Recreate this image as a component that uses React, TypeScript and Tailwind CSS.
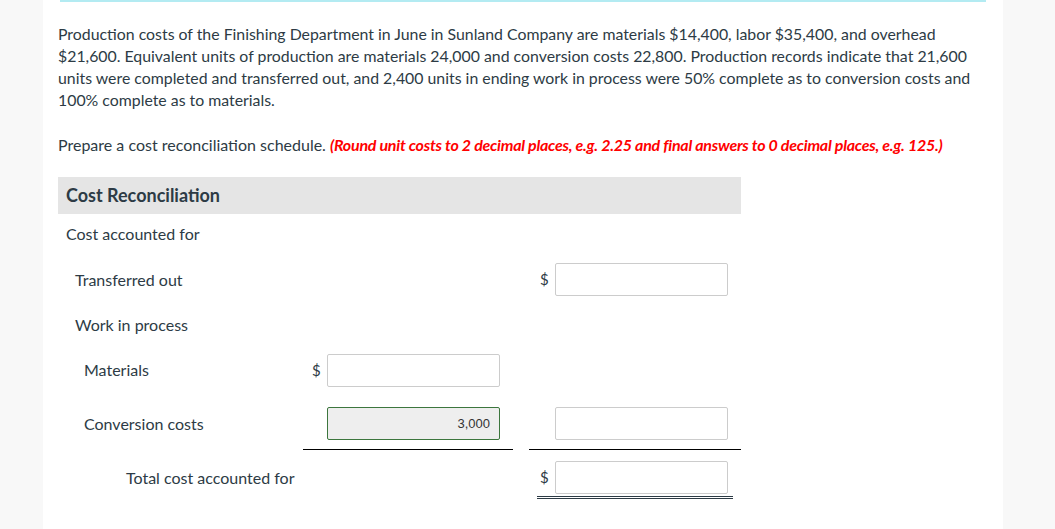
import React from 'react';

const Money: React.FC<{ dollar?: boolean; value?: string; filled?: boolean }> = ({ dollar, value, filled }) => (
    <div className="flex items-center">
        <span className={`w-[15px] text-[15px] ${dollar ? '' : 'invisible'}`}>$</span>
        <div
            className={`w-[173px] h-[33px] flex items-center justify-end px-[9px] rounded-[2px] border text-[13px] text-[#333] ${
                filled ? 'bg-[#eeeeee] border-[#3c763d]' : 'bg-white border-[#cccccc]'
            }`}
            style={{ fontFamily: 'Arial, "Liberation Sans", sans-serif' }}
        >
            {value}
        </div>
    </div>
);

export default function App() {
    return (
        <div className="min-h-[529px] bg-[#f8f8f8] text-[#2d3b45]" style={{ fontFamily: 'Lato, "Open Sans", sans-serif' }}>
            <div className="ml-[43px] w-[960px] min-h-[529px] bg-white">
                {/* top accent */}
                <div className="ml-[17px] w-[926px] h-[2px] bg-[#b3ebf2]" />

                <div className="px-[15px] pt-[21px]">
                    <p className="text-[15.85px] leading-[22px]">
                        Production costs of the Finishing Department in June in Sunland Company are materials $14,400, labor $35,400, and overhead
                        $21,600. Equivalent units of production are materials 24,000 and conversion costs 22,800. Production records indicate that 21,600
                        units were completed and transferred out, and 2,400 units in ending work in process were 50% complete as to conversion costs and
                        100% complete as to materials.
                    </p>

                    <p className="mt-[23px] text-[16px] leading-[22px]">
                        Prepare a cost reconciliation schedule.{' '}
                        <span className="text-[#ff0000] font-bold italic tracking-[-0.25px]">
                            (Round unit costs to 2 decimal places, e.g. 2.25 and final answers to 0 decimal places, e.g. 125.)
                        </span>
                    </p>

                    {/* schedule */}
                    <div className="mt-[21px] w-[683px]">
                        <div className="h-[37px] bg-[#e5e5e5] flex items-center px-[8px] text-[18px] font-bold">
                            Cost Reconciliation
                        </div>

                        <div className="h-[40px] flex items-center px-[8px] text-[16px]">Cost accounted for</div>

                        <div className="grid grid-cols-[229px_210px_212px] gap-x-[16px] text-[16px]">
                            {/* Transferred out */}
                            <div className="h-[51px] flex items-center pl-[17px]">Transferred out</div>
                            <div />
                            <div className="flex items-center justify-end pr-[13px]">
                                <Money dollar />
                            </div>

                            {/* Work in process */}
                            <div className="h-[40px] flex items-center pl-[17px]">Work in process</div>
                            <div />
                            <div />

                            {/* Materials */}
                            <div className="h-[50px] flex items-center pl-[26px]">Materials</div>
                            <div className="flex items-center justify-end pr-[13px]">
                                <Money dollar />
                            </div>
                            <div />

                            {/* Conversion costs */}
                            <div className="flex items-center pl-[26px] pt-[2px]">Conversion costs</div>
                            <div className="flex justify-end pr-[13px] pt-[12px] pb-[9px] border-b border-black">
                                <Money value="3,000" filled />
                            </div>
                            <div className="flex justify-end pr-[13px] pt-[12px] pb-[9px] border-b border-black">
                                <Money />
                            </div>

                            {/* Total */}
                            <div className="flex items-center pl-[68px] pt-[11px] pb-[5px] whitespace-nowrap">Total cost accounted for</div>
                            <div />
                            <div className="flex justify-end pr-[8px] pt-[11px]">
                                <div className="pl-[3px] pr-[5px] pb-[2px] border-b-[3px] border-double border-[#2d3b45]">
                                    <Money dollar />
                                </div>
                            </div>
                        </div>
                    </div>
                </div>
            </div>
        </div>
    );
}
